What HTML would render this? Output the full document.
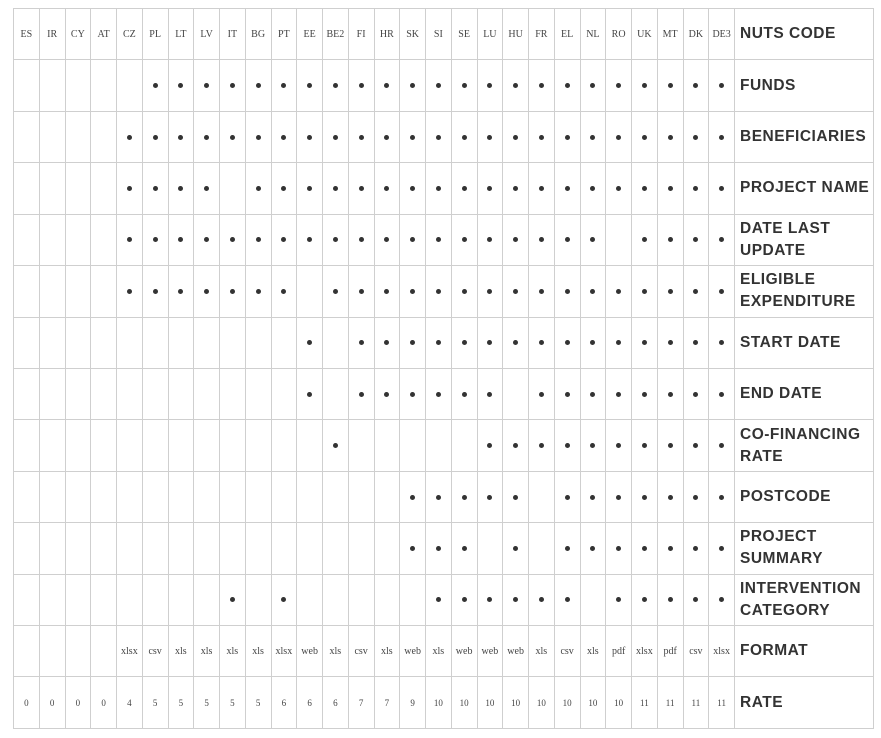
<!DOCTYPE html>
<html><head><meta charset="utf-8"><style>
html,body{margin:0;padding:0;background:#fff;width:881px;height:738px;overflow:hidden}
table{position:absolute;left:13px;top:8px;width:860px;height:721px;border-collapse:collapse;table-layout:fixed}
td{border:1px solid #cfcfcf;padding:0;text-align:center;vertical-align:middle;font-family:"Liberation Serif",serif;font-size:10px;color:#444;height:50px;overflow:hidden;white-space:nowrap}
td.l{text-align:left;padding-left:5px;font-family:"Liberation Sans",sans-serif;font-weight:bold;font-size:15.5px;letter-spacing:0.5px;color:#333;line-height:22px;white-space:normal}
.d{display:inline-block;width:5px;height:5px;border-radius:50%;background:#333}
</style></head><body>
<table id="t"><colgroup></colgroup></table>
<script>
var codes="ES IR CY AT CZ PL LT LV IT BG PT EE BE2 FI HR SK SI SE LU HU FR EL NL RO UK MT DK DE3".split(" ");
function r(a,b){var o=[];for(var i=a;i<=b;i++)o.push(i);return o}
var rows=[
["FUNDS",r(5,27)],
["BENEFICIARIES",r(4,27)],
["PROJECT NAME",r(4,7).concat(r(9,27))],
["DATE LAST UPDATE",r(4,22).concat(r(24,27))],
["ELIGIBLE EXPENDITURE",r(4,10).concat(r(12,27))],
["START DATE",[11].concat(r(13,27))],
["END DATE",[11].concat(r(13,18),r(20,27))],
["CO-FINANCING RATE",[12].concat(r(18,27))],
["POSTCODE",r(15,19).concat(r(21,27))],
["PROJECT SUMMARY",r(15,17).concat([19],r(21,27))],
["INTERVENTION CATEGORY",[8,10].concat(r(16,21),r(23,27))]
];
var fmt="xlsx csv xls xls xls xls xlsx web xls csv xls web xls web web web xls csv xls pdf xlsx pdf csv xlsx".split(" ");
var rate="0 0 0 0 4 5 5 5 5 5 6 6 6 7 7 9 10 10 10 10 10 10 10 10 11 11 11 11".split(" ");
var h='<colgroup>';for(var i=0;i<28;i++)h+='<col style="width:25.75px">';h+='<col style="width:139px"></colgroup>';
h+='<tr>';codes.forEach(function(c){h+='<td>'+c+'</td>'});h+='<td class="l">NUTS CODE</td></tr>';
rows.forEach(function(rw){h+='<tr>';for(var i=0;i<28;i++)h+='<td>'+(rw[1].indexOf(i)>=0?'<span class="d"></span>':'')+'</td>';h+='<td class="l">'+rw[0]+'</td></tr>'});
h+='<tr>';for(var i=0;i<28;i++)h+='<td>'+(i>=4?fmt[i-4]:'')+'</td>';h+='<td class="l">FORMAT</td></tr>';
h+='<tr>';for(var i=0;i<28;i++)h+='<td style="font-size:9px">'+rate[i]+'</td>';h+='<td class="l">RATE</td></tr>';
document.getElementById('t').innerHTML=h;
</script>
</body></html>
